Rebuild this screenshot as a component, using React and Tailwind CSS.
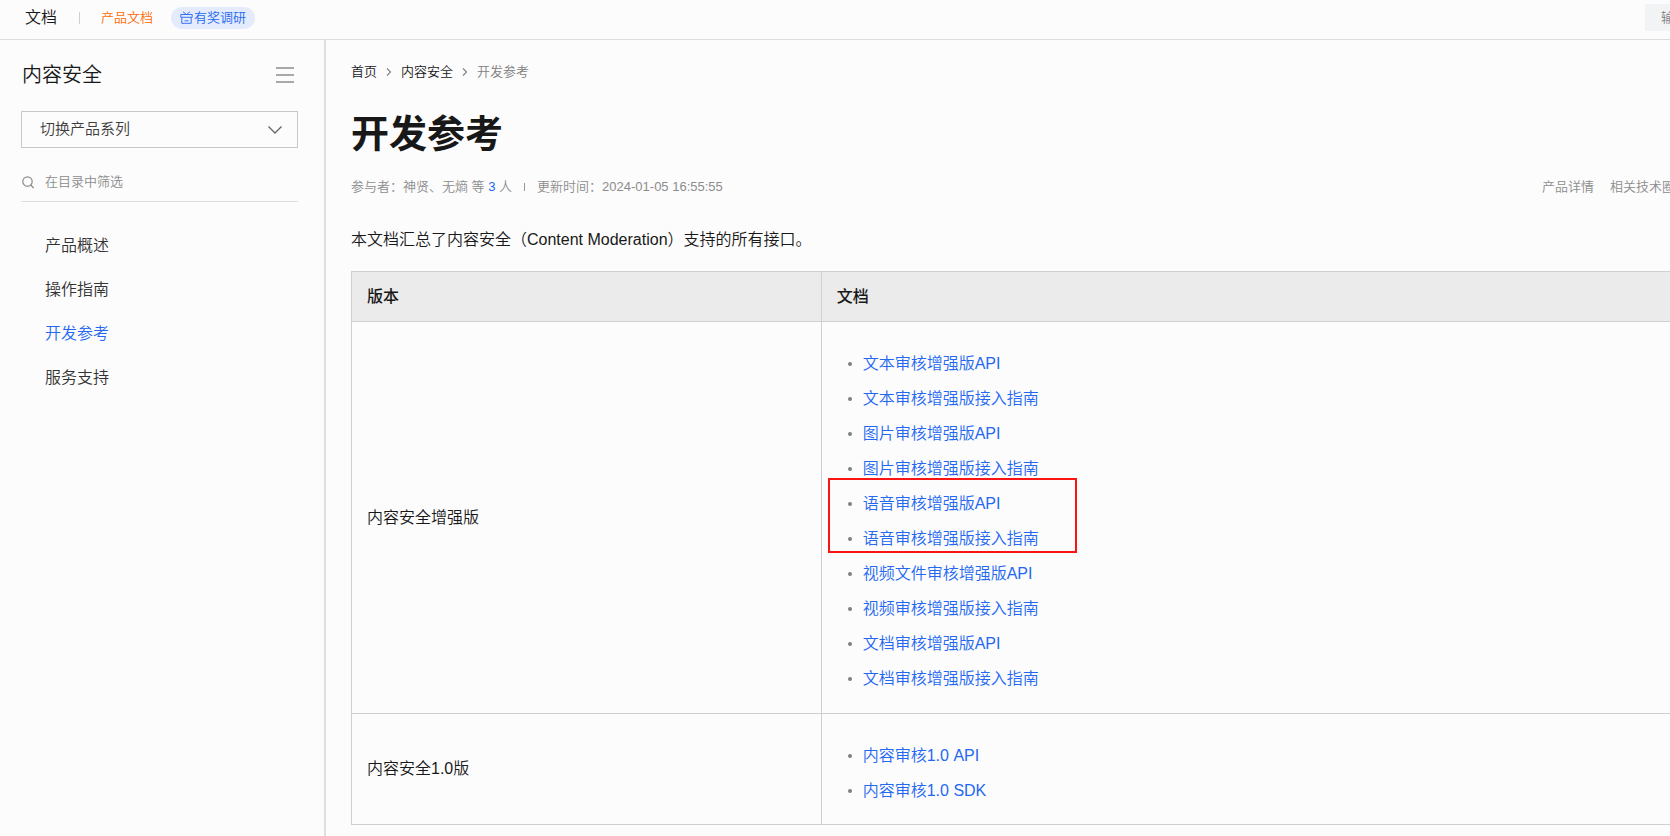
const enhanced = [
  "文本审核增强版API",
  "文本审核增强版接入指南",
  "图片审核增强版API",
  "图片审核增强版接入指南",
  "语音审核增强版API",
  "语音审核增强版接入指南",
  "视频文件审核增强版API",
  "视频审核增强版接入指南",
  "文档审核增强版API",
  "文档审核增强版接入指南",
];
const legacy = ["内容审核1.0 API", "内容审核1.0 SDK"];

const navItems = ["产品概述", "操作指南", "开发参考", "服务支持"];

function GiftIcon() {
  return (
    <svg width="13" height="13" viewBox="0 0 13 13" fill="none" stroke="currentColor" strokeWidth="0.9" aria-hidden="true">
      <path d="M.8 3.5h11.4v2.8H.8zM1.8 6.3v6h9.4v-6M3 .8l3.5 2.7L10 .8M4.5 9.8h4" />
    </svg>
  );
}

function Separator() {
  return (
    <svg width="6" height="10" viewBox="0 0 6 10" fill="none" stroke="#808080" strokeWidth="1.1" aria-hidden="true">
      <path d="M1 1.5L4.5 5 1 8.5" />
    </svg>
  );
}

function DocList({ items, children }) {
  return (
    <ul className="relative">
      {items.map((text) => (
        <li key={text} className="flex h-[35px] items-center gap-[11px] pl-[11px]">
          <span className="size-1 rounded-full bg-[#808080]" />
          <a href="#" className="text-[#2468f2]">{text}</a>
        </li>
      ))}
      {children}
    </ul>
  );
}

function Header() {
  return (
    <header className="flex h-10 shrink-0 items-center overflow-hidden border-b border-[#dcdcdc] pb-1 pl-[25px]">
      <a href="#" className="text-base text-[#181818]">文档</a>
      <span className="ml-[22px] h-3 w-px bg-[#d0d0d0]" />
      <a href="#" className="ml-[21px] text-[13px] text-[#ff6a00]">产品文档</a>
      <a
        href="#"
        className="ml-[18px] flex h-[22px] items-center gap-px rounded-full bg-[#e3ebfc] px-[9px] text-[13px] text-[#2468f2]"
      >
        <GiftIcon />
        有奖调研
      </a>
      <input
        type="text"
        aria-label="搜索"
        placeholder="输入"
        className="-mr-44 ml-auto h-[27px] w-[201px] bg-[#f2f3f5] pl-4 text-[13px] placeholder:text-[#808080]"
      />
    </header>
  );
}

function Sidebar() {
  return (
    <aside className="w-[326px] shrink-0 border-r-2 border-[#dedede] pl-[21px] pr-[26px]">
      <div className="mt-5 flex h-[30px] items-center justify-between pr-[3px] pl-px">
        <h2 className="text-xl text-[#181818]">内容安全</h2>
        <button type="button" aria-label="收起目录" className="text-[#8c8c8c]">
          <svg width="20" height="16" viewBox="0 0 20 16" stroke="currentColor" strokeWidth="1.6" aria-hidden="true">
            <path d="M1 1h18M1 8h18M1 15h18" />
          </svg>
        </button>
      </div>
      <div className="mt-[21px] grid items-center">
        <select
          aria-label="切换产品系列"
          className="col-start-1 row-start-1 h-[37px] w-full appearance-none border border-[#c8c8c8] bg-transparent pl-[18px] text-[15px] text-[#3d3d3d]"
        >
          <option>切换产品系列</option>
        </select>
        <svg
          className="pointer-events-none col-start-1 row-start-1 mr-4 justify-self-end"
          width="14" height="8" viewBox="0 0 14 8" fill="none" stroke="#666" strokeWidth="1.3" aria-hidden="true"
        >
          <path d="M.5.5L7 7 13.5.5" />
        </svg>
      </div>
      <label className="mt-[15px] flex h-[39px] items-center gap-[11px] border-b border-[#dedede] pl-px">
        <svg width="12" height="13" viewBox="0 0 12 13" fill="none" stroke="#8c8c8c" strokeWidth="1.2" aria-hidden="true">
          <circle cx="5.5" cy="5.5" r="4.7" />
          <path d="M8.8 9l2.8 3" />
        </svg>
        <input
          type="text"
          aria-label="在目录中筛选"
          placeholder="在目录中筛选"
          className="min-w-0 flex-1 bg-transparent text-[13px] placeholder:text-[#8c8c8c]"
        />
      </label>
      <nav className="mt-[22px] flex flex-col pl-6">
        {navItems.map((item) => (
          <a
            key={item}
            href="#"
            className={
              item === "开发参考"
                ? "flex h-11 items-center text-base text-[#2468f2]"
                : "flex h-11 items-center text-base text-[#333]"
            }
          >
            {item}
          </a>
        ))}
      </nav>
    </aside>
  );
}

export default function App() {
  return (
    <div className="flex min-h-screen flex-col overflow-hidden bg-[#fcfcfc] font-['Liberation_Sans','Noto_Sans_CJK_SC',sans-serif] font-[350] text-[#181818]">
      <Header />
      <div className="flex flex-1">
        <Sidebar />
        <main className="-mr-6 min-w-0 flex-1 pl-[25px]">
          <nav aria-label="面包屑" className="mt-[22px] flex h-5 items-center gap-[9px] text-[13px]">
            <a href="#">首页</a>
            <Separator />
            <a href="#">内容安全</a>
            <Separator />
            <span className="text-[#808080]">开发参考</span>
          </nav>
          <h1 className="mt-[27px] text-[38px] leading-[50px] font-bold">开发参考</h1>
          <div className="mt-[18px] flex h-5 items-center justify-between pr-[19px] text-[13px] text-[#8c8c8c]">
            <div className="flex items-center gap-3">
              <span>
                参与者：神贤、无熵 等 <a href="#" className="text-[#2468f2]">3</a> 人
              </span>
              <span className="h-2 w-px bg-[#999]" />
              <span>更新时间：2024-01-05 16:55:55</span>
            </div>
            <div className="flex gap-4">
              <a href="#">产品详情</a>
              <a href="#">相关技术圈</a>
            </div>
          </div>
          <p className="mt-[31px] text-base leading-[24px]">本文档汇总了内容安全（Content Moderation）支持的所有接口。</p>
          <table className="mt-[19px] w-full table-fixed border-collapse text-left text-base [&_td]:border [&_td]:border-[#d0d0d0] [&_td]:px-[15px] [&_th]:border [&_th]:border-[#d0d0d0] [&_th]:px-[15px]">
            <colgroup>
              <col className="w-[35%]" />
              <col />
            </colgroup>
            <thead>
              <tr className="h-[50px] bg-[#ebebeb]">
                <th className="font-medium">版本</th>
                <th className="font-medium">文档</th>
              </tr>
            </thead>
            <tbody>
              <tr>
                <td>内容安全增强版</td>
                <td className="pt-6 pb-[17px]">
                  <DocList items={enhanced}>
                    <li aria-hidden="true" className="pointer-events-none absolute top-[132px] -left-[9px] h-[75px] w-[249px] border-2 border-[#fa1414]" />
                  </DocList>
                </td>
              </tr>
              <tr>
                <td>内容安全1.0版</td>
                <td className="pt-6 pb-4">
                  <DocList items={legacy} />
                </td>
              </tr>
            </tbody>
          </table>
        </main>
      </div>
    </div>
  );
}
